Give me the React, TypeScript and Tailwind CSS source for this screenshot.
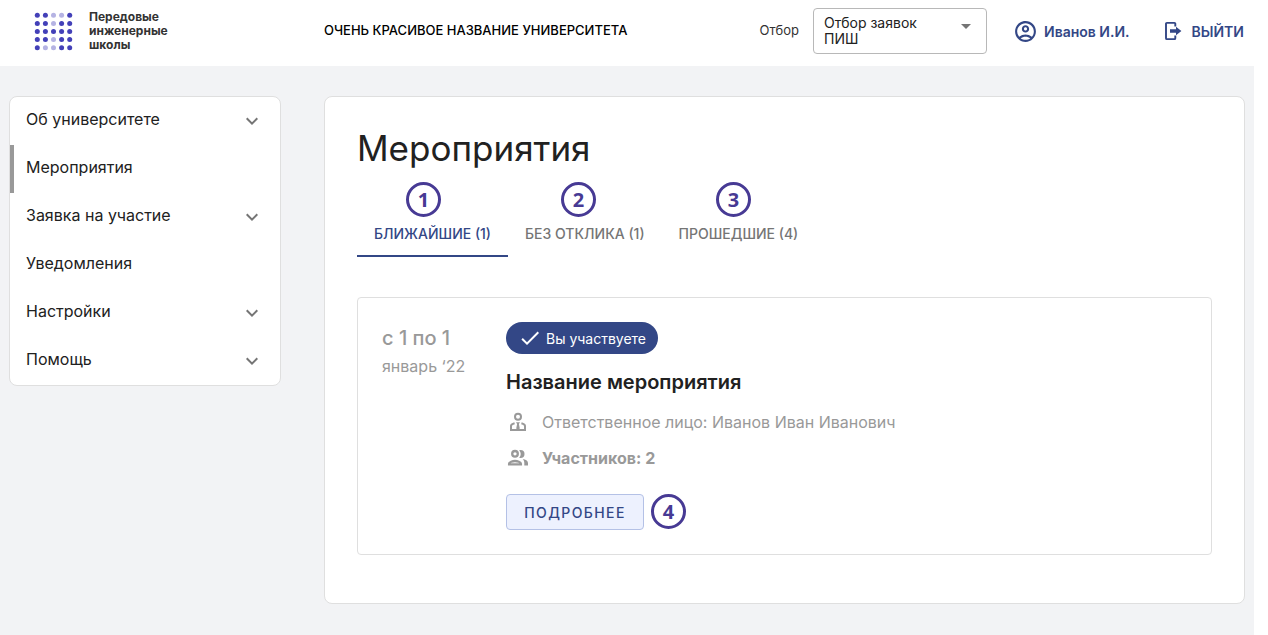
import { useState } from 'react'
import clsx from 'clsx'
import { MdArrowDropDown, MdCheck, MdExpandMore, MdOutlineAccountCircle } from 'react-icons/md'

const menu = [
  { title: 'Об университете', expandable: true },
  { title: 'Мероприятия', expandable: false },
  { title: 'Заявка на участие', expandable: true },
  { title: 'Уведомления', expandable: false },
  { title: 'Настройки', expandable: true },
  { title: 'Помощь', expandable: true },
]

const tabs = ['БЛИЖАЙШИЕ (1)', 'БЕЗ ОТКЛИКА (1)', 'ПРОШЕДШИЕ (4)']

// 0 - pale dot, 1 - solid dot
const logoDots = ['11001', '11011', '11111', '11011', '10011']

function Logo() {
  return (
    <a href="#" className="flex items-center gap-4">
      <svg width="39" height="39" viewBox="0 0 39 39" aria-hidden="true">
        {logoDots.map((row, y) =>
          row.split('').map((dot, x) => (
            <circle
              key={`${x}-${y}`}
              cx={3.3 + x * 8.1}
              cy={3.3 + y * 8.1}
              r="2.5"
              fill={dot === '1' ? '#4340b8' : '#b5b3e3'}
            />
          ))
        )}
      </svg>
      <span className="text-[12px] leading-[14px] font-bold text-[#333]">
        Передовые
        <br />
        инженерные
        <br />
        школы
      </span>
    </a>
  )
}

function ExitIcon() {
  return (
    <svg width="18" height="20" viewBox="0 0 18 20" aria-hidden="true">
      <path
        d="M11.3 5.6V2.8a.9.9 0 0 0-.9-.9H2.9a.9.9 0 0 0-.9.9v14.4a.9.9 0 0 0 .9.9h7.5a.9.9 0 0 0 .9-.9v-2.8"
        fill="none"
        stroke="currentColor"
        strokeWidth="1.9"
      />
      <path d="M6 8.3h6V5.8l5.400 4.200-5.400 4.200v-2.500H6z" fill="currentColor" />
    </svg>
  )
}

function ResponsibleIcon() {
  return (
    <svg width="24" height="24" viewBox="0 0 24 24" fill="none" stroke="currentColor" aria-hidden="true">
      <circle cx="12" cy="6.7" r="3" strokeWidth="2" />
      <path d="M8.6 13.2c-2 .5-3.600 1.400-3.600 2.900v4H19v-4c0-1.500-1.600-2.400-3.600-2.900" strokeWidth="2" />
      <path d="M10 12.200h4l-1.100 1.800.9 4.400-1.800 1.700-1.800-1.700.9-4.400z" fill="currentColor" stroke="none" />
    </svg>
  )
}

function ParticipantsIcon() {
  return (
    <svg width="24" height="24" viewBox="0 0 24 24" fill="none" stroke="currentColor" aria-hidden="true">
      <circle cx="9" cy="7.8" r="2.8" strokeWidth="2.3" />
      <path d="M3.100 18.300v-.5c0-1.800 3.600-2.800 5.900-2.800s5.900 1 5.900 2.800v.5z" strokeWidth="2.300" />
      <path
        d="M13.2 4.2c.5-.15 1-.2 1.3-.2a4 4 0 0 1 0 8c-.4 0-.9-.1-1.3-.2a6 6 0 0 0 0-7.6zM16.7 13.1c2.9.5 5.300 1.800 5.300 4v2.400h-3.700v-2.400c0-1.700-.6-3-1.600-4z"
        fill="currentColor"
        stroke="none"
      />
    </svg>
  )
}

function StepBadge({ value }: { value: number }) {
  return (
    <span className="flex size-[35px] shrink-0 items-center justify-center rounded-full border-3 border-[#473a94] bg-white font-['Noto_Sans',sans-serif] text-[20px] leading-none font-bold text-[#473a94]">
      {value}
    </span>
  )
}

function Header() {
  return (
    <header className="flex h-[66px] items-center pr-[10px] pb-1 pl-[34px]">
      <div className="w-[290px] shrink-0">
        <Logo />
      </div>
      <p className="flex-1 text-[13px] font-medium text-black">
        ОЧЕНЬ КРАСИВОЕ НАЗВАНИЕ УНИВЕРСИТЕТА
      </p>
      <label htmlFor="selection" className="mr-[14px] text-[13px] text-[#333]">
        Отбор
      </label>
      <div className="relative mr-[26px]">
        <select
          id="selection"
          className="h-[46px] w-[174px] appearance-none rounded-[4px] border border-[#b8b8b8] bg-white pr-12 pl-[10px] text-[14px] leading-[16px] whitespace-normal text-[#212121]"
        >
          <option>Отбор заявок ПИШ</option>
        </select>
        <MdArrowDropDown className="pointer-events-none absolute top-[6px] right-[9px] size-6 text-[#757575]" />
      </div>
      <a href="#" className="mr-[34px] flex items-center gap-[6px] text-[14px] font-semibold text-[#334786]">
        <MdOutlineAccountCircle className="size-[25px]" />
        Иванов И.И.
      </a>
      <button type="button" className="flex items-center gap-[10px] text-[14px] font-semibold text-[#334786]">
        <ExitIcon />
        ВЫЙТИ
      </button>
    </header>
  )
}

function Sidebar() {
  return (
    <nav className="w-[272px] shrink-0 overflow-hidden rounded-lg border border-[#dfdfdf] bg-white">
      {menu.map(item => (
        <a
          key={item.title}
          href="#"
          className={clsx(
            'flex h-12 items-center justify-between border-l-4 pr-4 pl-3 text-[16px] text-[#212121]',
            item.title === 'Мероприятия' ? 'border-[#999]' : 'border-transparent'
          )}
        >
          <span className="pb-1">{item.title}</span>
          {item.expandable && <MdExpandMore className="size-6 text-[#757575]" />}
        </a>
      ))}
    </nav>
  )
}

function EventCard() {
  return (
    <article className="flex rounded-[4px] border border-[#dfdfdf] p-6">
      <div className="w-[124px] shrink-0 text-[#999]">
        <p className="text-[20px] leading-[32px] font-medium">с 1 по 1</p>
        <p className="text-[16px] leading-[24px]">январь ‘22</p>
      </div>
      <div className="flex-1">
        <div className="flex h-8 w-fit items-center gap-1 rounded-full bg-[#334786] px-3 text-[14px] text-white">
          <MdCheck className="size-6" />
          Вы участвуете
        </div>
        <h2 className="mt-3 text-[20px] leading-[32px] font-semibold text-[#212121]">
          Название мероприятия
        </h2>
        <div className="mt-3 flex h-6 items-center gap-3 text-[16px] text-[#999]">
          <ResponsibleIcon />
          Ответственное лицо: Иванов Иван Иванович
        </div>
        <div className="mt-3 flex h-6 items-center gap-3 text-[16px] font-bold text-[#999]">
          <ParticipantsIcon />
          Участников: 2
        </div>
        <div className="mt-6 flex h-9 items-start gap-[7px]">
          <button
            type="button"
            className="h-9 w-[138px] rounded-[4px] border border-[#b4c1e6] bg-[#edf1fe] text-[14px] font-medium tracking-widest text-[#334786]"
          >
            ПОДРОБНЕЕ
          </button>
          <StepBadge value={4} />
        </div>
      </div>
    </article>
  )
}

export default function App() {
  const [active, setActive] = useState(0)

  return (
    <div className="min-h-screen bg-white pr-[14px] font-['Inter',sans-serif]">
      <Header />
      <div className="flex min-h-[calc(100vh-66px)] items-start gap-[43px] bg-[#f2f3f5] px-[9px] pt-[30px] pb-8">
        <Sidebar />
        <main className="flex-1 rounded-lg border border-[#dfdfdf] bg-white px-8 pt-[30px] pb-12">
          <h1 className="text-[35px] leading-[42px] text-[#212121]">Мероприятия</h1>
          <div className="mt-[13px] flex gap-[120px] pl-[49px]">
            <StepBadge value={1} />
            <StepBadge value={2} />
            <StepBadge value={3} />
          </div>
          <div role="tablist" className="mb-10 flex">
            {tabs.map((tab, i) => (
              <button
                key={tab}
                type="button"
                role="tab"
                aria-selected={i === active}
                onClick={() => setActive(i)}
                className={clsx(
                  'h-10 border-b-2 px-[17px] pb-[6px] text-[14px] font-medium',
                  i === active ? 'border-[#334786] text-[#334786]' : 'border-transparent text-[#757575]'
                )}
              >
                {tab}
              </button>
            ))}
          </div>
          <EventCard />
        </main>
      </div>
    </div>
  )
}
